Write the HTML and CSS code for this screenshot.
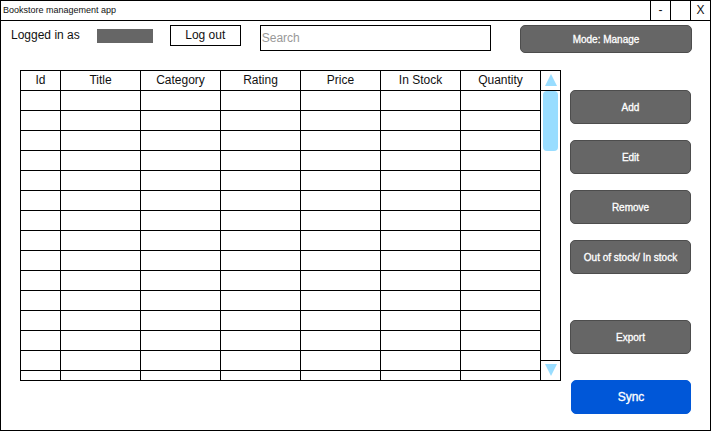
FILE: index.html
```html
<!DOCTYPE html>
<html lang="en">
<head>
  <meta charset="utf-8">
  <meta name="viewport" content="width=device-width, initial-scale=1">
  <title>Bookstore management app</title>
  <link rel="stylesheet" href="styles.css">
</head>
<body>
  <div class="window">
    <header class="titlebar">
      <h1 class="titlebar-name">Bookstore management app</h1>
      <button class="window-button" type="button" aria-label="Minimize">-</button>
      <button class="window-button" type="button" aria-label="Maximize"></button>
      <button class="window-button" type="button" aria-label="Close">X</button>
    </header>

    <div class="toolbar">
      <div class="session">
        <span class="session-label">Logged in as</span>
        <span class="session-user"></span>
        <button class="logout" type="button">Log out</button>
      </div>
      <input class="search" type="search" placeholder="Search" aria-label="Search">
      <button class="button button-mode" type="button">Mode: Manage</button>
    </div>

    <main class="content">
      <div class="grid">
        <table class="books">
          <colgroup><col class="col-id"><col span="6"></colgroup>
          <thead>
            <tr><th>Id</th><th>Title</th><th>Category</th><th>Rating</th><th>Price</th><th>In Stock</th><th>Quantity</th></tr>
          </thead>
          <tbody>
            <tr><td></td><td></td><td></td><td></td><td></td><td></td><td></td></tr>
            <tr><td></td><td></td><td></td><td></td><td></td><td></td><td></td></tr>
            <tr><td></td><td></td><td></td><td></td><td></td><td></td><td></td></tr>
            <tr><td></td><td></td><td></td><td></td><td></td><td></td><td></td></tr>
            <tr><td></td><td></td><td></td><td></td><td></td><td></td><td></td></tr>
            <tr><td></td><td></td><td></td><td></td><td></td><td></td><td></td></tr>
            <tr><td></td><td></td><td></td><td></td><td></td><td></td><td></td></tr>
            <tr><td></td><td></td><td></td><td></td><td></td><td></td><td></td></tr>
            <tr><td></td><td></td><td></td><td></td><td></td><td></td><td></td></tr>
            <tr><td></td><td></td><td></td><td></td><td></td><td></td><td></td></tr>
            <tr><td></td><td></td><td></td><td></td><td></td><td></td><td></td></tr>
            <tr><td></td><td></td><td></td><td></td><td></td><td></td><td></td></tr>
            <tr><td></td><td></td><td></td><td></td><td></td><td></td><td></td></tr>
            <tr><td></td><td></td><td></td><td></td><td></td><td></td><td></td></tr>
            <tr class="row-clipped"><td></td><td></td><td></td><td></td><td></td><td></td><td></td></tr>
          </tbody>
        </table>
        <div class="scrollbar">
          <button class="scroll-arrow scroll-up" type="button" aria-label="Scroll up">
            <svg width="12" height="12" viewBox="0 0 12 12"><path d="M6 0 12 12H0Z" fill="#99ddff"/></svg>
          </button>
          <div class="scroll-track"><div class="scroll-thumb"></div></div>
          <button class="scroll-arrow scroll-down" type="button" aria-label="Scroll down">
            <svg width="12" height="12" viewBox="0 0 12 12"><path d="M0 0H12L6 12Z" fill="#99ddff"/></svg>
          </button>
        </div>
      </div>

      <div class="actions">
        <button class="button" type="button">Add</button>
        <button class="button" type="button">Edit</button>
        <button class="button" type="button">Remove</button>
        <button class="button" type="button">Out of stock/ In stock</button>
        <button class="button button-export" type="button">Export</button>
        <button class="button button-sync" type="button">Sync</button>
      </div>
    </main>
  </div>
</body>
</html>
```
FILE: styles.css
```css
* {
  box-sizing: border-box;
}

body {
  margin: 0;
  background: #fff;
  color: #111;
  font: 12px/16px "Liberation Sans", Arial, sans-serif;
}

button,
input {
  margin: 0;
  padding: 0;
  border: 0;
  border-radius: 0;
  background: none;
  color: inherit;
  font: inherit;
}

.window {
  min-height: 100vh;
  border: 1px solid #000;
}

.titlebar {
  display: flex;
  height: 20px;
  border-bottom: 1px solid #000;
}

.titlebar-name {
  flex: 1;
  margin: 0;
  padding-left: 2px;
  font-size: 9px;
  font-weight: 400;
  line-height: 18px;
}

.window-button {
  width: 20px;
  padding-bottom: 2px;
  border-left: 1px solid #000;
}

.toolbar {
  display: flex;
  align-items: flex-start;
  padding: 4px 18px 0 10px;
}

.session {
  display: flex;
  align-items: center;
  gap: 17px;
  margin-right: 19px;
}

.session-label {
  padding-bottom: 2px;
}

.session-user {
  width: 56px;
  height: 14px;
  background: #666;
}

.logout {
  width: 71px;
  height: 21px;
  padding-bottom: 2px;
  border: 1px solid #000;
}

.search {
  flex: 1;
  min-width: 0;
  height: 26px;
  margin-right: 29px;
  padding-left: 1px;
  border: 1px solid #000;
  appearance: none;
}

.search::placeholder {
  color: #999;
  opacity: 1;
}

.button {
  height: 34px;
  padding-top: 2px;
  border: 1px solid #4d4d4d;
  border-radius: 5px;
  background: #666;
  color: #fff;
  font-size: 10px;
  -webkit-text-stroke: 0.3px #fff;
}

.button-mode {
  width: 172px;
  height: 28px;
}

.content {
  display: flex;
  align-items: flex-start;
  gap: 9px;
  padding: 17px 19px 16px;
}

.grid {
  display: flex;
  flex: 1;
  border-bottom: 1px solid #000;
}

.books {
  flex: 1;
  width: 100%;
  table-layout: fixed;
  border-collapse: separate;
  border-spacing: 0;
}

.col-id {
  width: 40px;
}

.books th,
.books td {
  height: 20px;
  padding: 0;
  border-top: 1px solid #000;
  border-left: 1px solid #000;
  font-weight: 400;
}

.books th {
  padding-bottom: 2px;
}

.books .row-clipped td {
  height: 10px;
}

.scrollbar {
  display: flex;
  flex-direction: column;
  width: 21px;
  border: solid #000;
  border-width: 1px 1px 0;
}

.scroll-arrow {
  display: grid;
  place-items: center;
  height: 20px;
  padding-bottom: 1px;
}

.scroll-up {
  border-bottom: 1px solid #000;
}

.scroll-down {
  border-top: 1px solid #000;
}

.scroll-track {
  flex: 1;
  padding: 0 2px;
}

.scroll-thumb {
  height: 60px;
  border-radius: 4px;
  background: #99ddff;
}

.actions {
  display: flex;
  flex-direction: column;
  gap: 16px;
  width: 121px;
  padding-top: 20px;
}

.button-export {
  margin-top: 30px;
}

.button-sync {
  margin-top: 10px;
  margin-left: 1px;
  padding-top: 0;
  border-color: #0057d8;
  background: #0057d8;
  font-size: 12px;
}
```
